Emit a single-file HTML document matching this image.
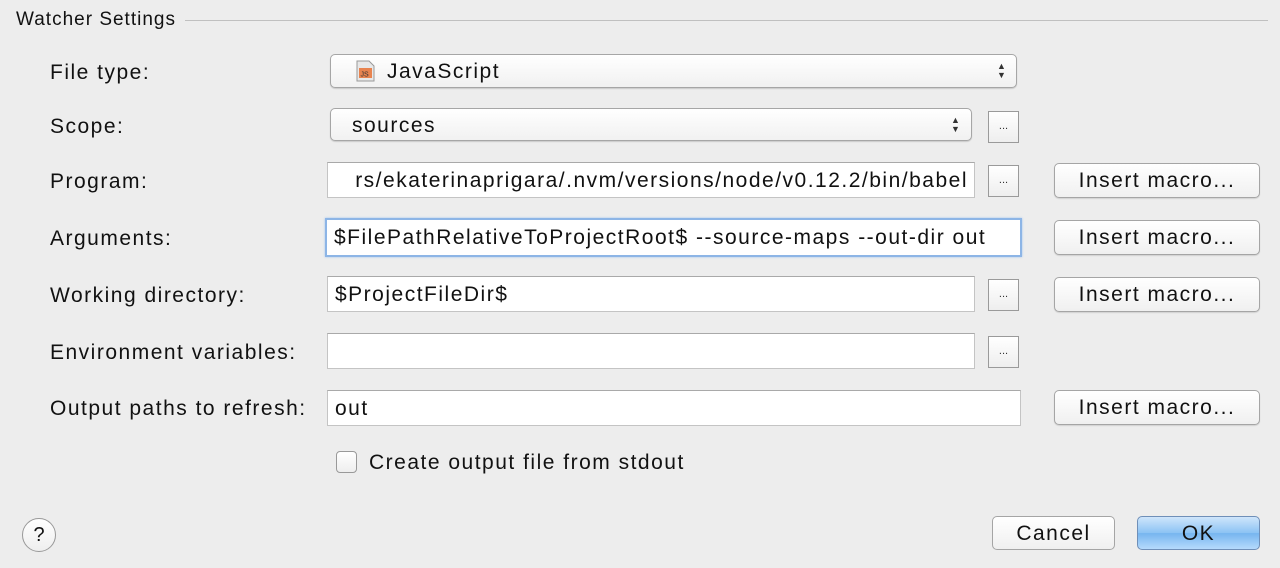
<!DOCTYPE html>
<html><head><style>
body{margin:0;width:1280px;height:568px;background:#ededed;font-family:"Liberation Sans",sans-serif;color:#111;position:relative;overflow:hidden;letter-spacing:1.5px}
.a{position:absolute}
.lbl{position:absolute;left:50px;font-size:21px;line-height:24px}
.combo{position:absolute;border:1px solid #a6a6a6;border-radius:5px;background:linear-gradient(#fff,#f1f1f1);box-shadow:0 1px 1px rgba(0,0,0,.15);font-size:21px;box-sizing:border-box}
.field{position:absolute;border:1px solid #c4c4c4;border-top-color:#a9a9a9;background:#fff;box-sizing:border-box;font-size:21px;line-height:35px;padding-left:7px;white-space:nowrap;overflow:hidden}
.dots{position:absolute;width:31px;height:32px;border:1px solid #9a9a9a;background:linear-gradient(#fff,#eee);box-sizing:border-box;font-size:11px;letter-spacing:0;text-align:center;line-height:28px;color:#333}
.btn{position:absolute;left:1054px;width:206px;height:35px;border:1px solid #a5a5a5;border-radius:5px;background:linear-gradient(#fff,#f0f0f0);box-sizing:border-box;box-shadow:0 1px 1px rgba(0,0,0,.12);font-size:21px;text-align:center;line-height:33px}
.arr{position:absolute;font-size:9px;line-height:9px;color:#333;letter-spacing:0}
</style></head><body>
<div class="a" style="left:16px;top:9px;font-size:19px;letter-spacing:1px">Watcher Settings</div>
<div class="a" style="left:185px;top:20px;width:1083px;height:1px;background:#c0c0c0"></div>

<div class="lbl" style="top:61px">File type:</div>
<div class="combo" style="left:330px;top:54px;width:687px;height:34px">
 <svg class="a" style="left:25px;top:5px" width="20" height="22"><path d="M1 1h12l5 5v15H1z" fill="#e8e8e8" stroke="#999"/><rect x="3" y="8" width="13" height="10" fill="#e8834f"/><text x="4.5" y="16.5" font-size="7" fill="#333" font-family="Liberation Sans" letter-spacing="0">JS</text></svg>
 <span class="a" style="left:56px;top:5px">JavaScript</span>
 <div class="arr" style="left:666px;top:7px">▲<br>▼</div>
</div>

<div class="lbl" style="top:115px">Scope:</div>
<div class="combo" style="left:330px;top:108px;width:642px;height:33px">
 <span class="a" style="left:21px;top:5px">sources</span>
 <div class="arr" style="left:620px;top:7px">▲<br>▼</div>
</div>
<div class="dots" style="left:988px;top:111px">...</div>

<div class="lbl" style="top:170px">Program:</div>
<div class="field" style="left:327px;top:162px;width:648px;height:36px;direction:rtl;padding-left:0;padding-right:6px;text-align:right"><span style="direction:ltr;unicode-bidi:bidi-override">rs/ekaterinaprigara/.nvm/versions/node/v0.12.2/bin/babel</span></div>
<div class="dots" style="left:988px;top:165px">...</div>
<div class="btn" style="top:163px">Insert macro...</div>

<div class="lbl" style="top:227px">Arguments:</div>
<div class="field" style="left:325px;top:218px;width:697px;height:39px;border:2px solid #8db5e6;box-shadow:0 0 2px #9cc3f0;line-height:36px">$FilePathRelativeToProjectRoot$ --source-maps --out-dir out</div>
<div class="btn" style="top:220px">Insert macro...</div>

<div class="lbl" style="top:284px">Working directory:</div>
<div class="field" style="left:327px;top:276px;width:648px;height:36px">$ProjectFileDir$</div>
<div class="dots" style="left:988px;top:279px">...</div>
<div class="btn" style="top:277px">Insert macro...</div>

<div class="lbl" style="top:341px">Environment variables:</div>
<div class="field" style="left:327px;top:333px;width:648px;height:36px"></div>
<div class="dots" style="left:988px;top:336px">...</div>

<div class="lbl" style="top:397px">Output paths to refresh:</div>
<div class="field" style="left:327px;top:390px;width:694px;height:36px">out</div>
<div class="btn" style="top:390px">Insert macro...</div>

<div class="a" style="left:336px;top:451px;width:21px;height:22px;border:1px solid #999;border-radius:4px;background:linear-gradient(#fff,#eee);box-sizing:border-box"></div>
<div class="a" style="left:369px;top:451px;font-size:21px">Create output file from stdout</div>

<div class="a" style="left:22px;top:518px;width:34px;height:34px;border:1px solid #999;border-radius:50%;background:linear-gradient(#fff,#eee);box-sizing:border-box;text-align:center;font-size:20px;letter-spacing:0;line-height:32px">?</div>
<div class="a" style="left:992px;top:516px;width:123px;height:34px;border:1px solid #a5a5a5;border-radius:5px;background:linear-gradient(#fff,#f0f0f0);box-sizing:border-box;text-align:center;font-size:21px;line-height:33px">Cancel</div>
<div class="a" style="left:1137px;top:516px;width:123px;height:34px;border:1px solid #6f8fb8;border-radius:5px;background:linear-gradient(#cfe5fb,#8cc3f4 50%,#76b5ef 51%,#b5dafc);box-sizing:border-box;text-align:center;font-size:21px;line-height:33px">OK</div>
</body></html>
